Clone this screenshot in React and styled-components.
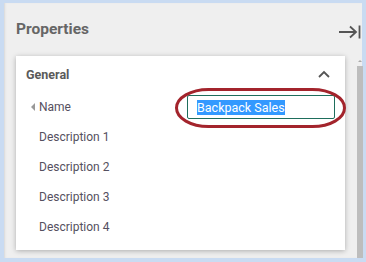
import React from 'react';
import styled, { createGlobalStyle } from 'styled-components';

const GlobalStyle = createGlobalStyle`
	html, body {
		margin: 0;
		padding: 0;
		background: #c9dbf2;
	}
	body {
		font-family: Roboto, 'Liberation Sans', sans-serif;
	}
`;

const Frame = styled.div`
	width: 366px;
	height: 262px;
	box-sizing: border-box;
	padding: 3px 4px 4px 4px;
	background: #c9dbf2;
`;

const Panel = styled.div`
	height: 100%;
	background: #efefef;
	display: flex;
	flex-direction: column;
	box-shadow: inset 2px 0 2px -1px #d8d8d8;
`;

const Header = styled.div`
	height: 53px;
	display: flex;
	align-items: center;
	justify-content: space-between;
	padding: 0 0 0 12px;
	box-sizing: border-box;
	h2 {
		margin: 0;
		font-size: 15.5px;
		font-weight: 700;
		color: #666;
		margin-top: -2px;
	}
`;

const Collapse = styled.button`
	border: 0;
	background: none;
	padding: 0;
	width: 24px;
	height: 14px;
	margin-top: 4px;
	display: flex;
`;

const Body = styled.div`
	flex: 1;
	display: flex;
	padding-left: 12px;
	min-height: 0;
`;

const Card = styled.div`
	position: relative;
	width: 329px;
	height: 194px;
	flex-shrink: 0;
	background: #fff;
	box-shadow: 0 1px 5px rgba(0, 0, 0, 0.28);
	box-sizing: border-box;
	padding: 0 15px 0 10px;
`;

const CardHead = styled.div`
	height: 36px;
	display: flex;
	align-items: center;
	justify-content: space-between;
	h3 {
		margin: 0;
		font-size: 12.5px;
		font-weight: 700;
		color: #5a5a5a;
	}
`;

const Row = styled.div`
	height: 30px;
	display: flex;
	align-items: center;
	padding-left: ${p => (p.$active ? '5px' : '13px')};
	gap: 4px;
`;

const Caret = styled.span`
	flex-shrink: 0;
	width: 0;
	height: 0;
	border-top: 4px solid transparent;
	border-bottom: 4px solid transparent;
	border-right: 4px solid #999;
`;

const Label = styled.span`
	flex-shrink: 0;
	font-size: 12px;
	color: #555060;
	width: 144px;
`;

const Field = styled.div`
	flex-shrink: 0;
	width: 148px;
	height: 24px;
	box-sizing: border-box;
	border: 1px solid #1e6e5c;
	border-radius: 2px;
	display: flex;
	align-items: center;
	padding-left: 9px;
`;

const Selected = styled.span`
	background: #3399ff;
	color: #fff;
	font-size: 12.5px;
	line-height: 15px;
`;

const Ring = styled.svg`
	position: absolute;
	left: 159px;
	top: 32px;
	overflow: visible;
`;

const Track = styled.div`
	width: 6px;
	margin-left: 12px;
	display: flex;
	flex-direction: column;
	align-items: center;
	.arrow {
		width: 0;
		height: 0;
		margin-top: 4px;
		border-left: 2px solid transparent;
		border-right: 2px solid transparent;
		border-bottom: 2px solid #aaa;
	}
	.thumb {
		flex: 1;
		width: 6px;
		margin-top: 4px;
		background: #bdbdbd;
	}
`;

const rows = ['Description 1', 'Description 2', 'Description 3', 'Description 4'];

export default function App() {
	return (
		<Frame>
			<GlobalStyle />
			<Panel>
				<Header>
					<h2>Properties</h2>
					<Collapse aria-label='collapse'>
						<svg width='24' height='14' viewBox='0 0 24 14'>
							<path d='M1 7H18M12 1.5L18 7L12 12.5' stroke='#555' strokeWidth='1.8' fill='none' />
							<path d='M21.5 0.5V13.5' stroke='#555' strokeWidth='1.8' />
						</svg>
					</Collapse>
				</Header>
				<Body>
					<Card>
						<CardHead>
							<h3>General</h3>
							<svg width='12' height='8' viewBox='0 0 12 8'>
								<path d='M1 7L6 2L11 7' stroke='#555' strokeWidth='1.8' fill='none' />
							</svg>
						</CardHead>
						<Row $active>
							<Caret />
							<Label>Name</Label>
							<Field>
								<Selected>Backpack Sales</Selected>
							</Field>
						</Row>
						{rows.map(r => (
							<Row key={r}>
								<Label>{r}</Label>
							</Row>
						))}
						<Ring width='171' height='40' viewBox='0 0 171 40'>
							<rect x='1.5' y='1.5' width='168' height='37' rx='32' ry='18.5' fill='none' stroke='#a3242c' strokeWidth='3' />
						</Ring>
					</Card>
					<Track>
						<div className='arrow' />
						<div className='thumb' />
					</Track>
				</Body>
			</Panel>
		</Frame>
	);
}
